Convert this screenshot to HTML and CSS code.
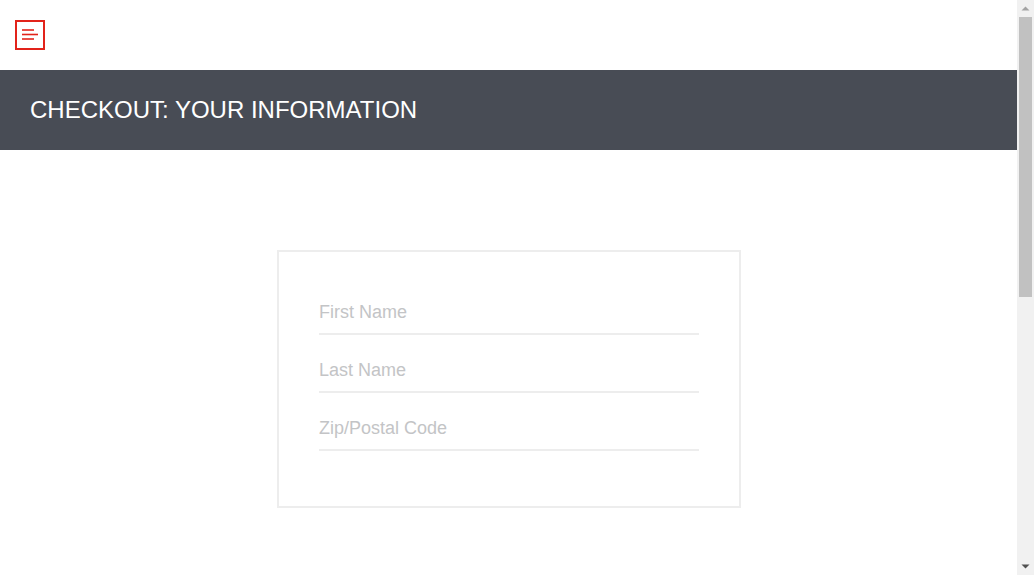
FILE: index.html
```html
<!DOCTYPE html>
<html lang="en">
<head>
<meta charset="utf-8">
<title>Checkout: Your Information</title>
<link rel="stylesheet" href="styles.css">
</head>
<body>
<div class="page">
  <div class="primary-header">
    <button class="menu-button" type="button" aria-label="Open Menu">
      <svg width="30" height="30" viewBox="0 0 30 30" aria-hidden="true">
        <rect x="1" y="1" width="28" height="28" fill="none" stroke="#e2231a" stroke-width="2"/>
        <line x1="7" y1="10" x2="19" y2="10" stroke="#e2231a" stroke-width="1.6"/>
        <line x1="7" y1="14.5" x2="23" y2="14.5" stroke="#e2231a" stroke-width="1.6"/>
        <line x1="7" y1="19" x2="19" y2="19" stroke="#e2231a" stroke-width="1.6"/>
      </svg>
    </button>
  </div>
  <div class="secondary-header">
    <span class="title">CHECKOUT: YOUR INFORMATION</span>
  </div>
  <div class="checkout-content">
    <form class="checkout-form">
      <input class="form-input" type="text" placeholder="First Name">
      <input class="form-input" type="text" placeholder="Last Name">
      <input class="form-input" type="text" placeholder="Zip/Postal Code">
    </form>
  </div>
</div>
<div class="scrollbar" aria-hidden="true">
  <div class="scroll-button">
    <svg width="17" height="17" viewBox="0 0 17 17"><path d="M4.5 10.5 L8.5 6.5 L12.5 10.5 Z" fill="#a3a3a3"/></svg>
  </div>
  <div class="scroll-track">
    <div class="scroll-thumb"></div>
  </div>
  <div class="scroll-button">
    <svg width="17" height="17" viewBox="0 0 17 17"><path d="M4.5 6.5 L12.5 6.5 L8.5 10.5 Z" fill="#505050"/></svg>
  </div>
</div>
</body>
</html>
```
FILE: styles.css
```css
html, body {
  margin: 0;
  padding: 0;
  background: #ffffff;
  font-family: "Liberation Sans", Arial, sans-serif;
}

.page {
  min-height: 1110px;
  margin-right: 17px;
}

.primary-header {
  height: 70px;
  box-sizing: border-box;
  padding: 20px 15px;
  display: flex;
  align-items: flex-start;
}

.menu-button {
  width: 30px;
  height: 30px;
  padding: 0;
  margin: 0;
  border: 0;
  background: transparent;
  cursor: pointer;
  display: block;
}

.menu-button svg {
  display: block;
}

.secondary-header {
  height: 80px;
  background: #484c55;
  display: flex;
  align-items: center;
  padding: 0 30px;
}

.title {
  color: #ffffff;
  font-size: 24px;
  line-height: 80px;
}

.checkout-content {
  display: flex;
  justify-content: center;
  padding-top: 100px;
  padding-left: 1px;
}

.checkout-form {
  width: 380px;
  border: 2px solid #ededed;
  padding: 41px 40px 55px;
  display: flex;
  flex-direction: column;
  gap: 16px;
}

.form-input {
  display: block;
  width: 100%;
  height: 42px;
  box-sizing: border-box;
  margin: 0;
  padding: 0 0 2px;
  border: 0;
  border-bottom: 2px solid #ededed;
  outline: none;
  font-family: "Liberation Sans", Arial, sans-serif;
  font-size: 18px;
  color: #484c55;
  background: transparent;
}

.form-input::placeholder {
  color: #c3c4c6;
}

/* Browser scrollbar as seen in the capture */
.scrollbar {
  position: fixed;
  top: 0;
  right: 0;
  bottom: 0;
  width: 17px;
  background: #f1f1f1;
  display: flex;
  flex-direction: column;
}

.scroll-button {
  height: 17px;
  flex: none;
}

.scroll-button svg {
  display: block;
}

.scroll-track {
  flex: 1;
  padding: 0 2px;
}

.scroll-thumb {
  height: 280px;
  background: #c1c1c1;
}
```
